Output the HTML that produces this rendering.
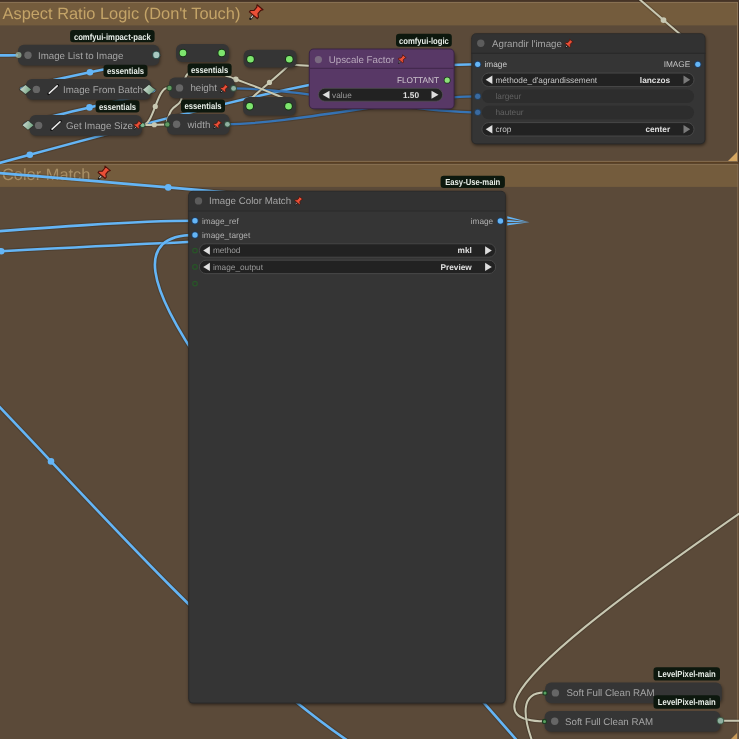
<!DOCTYPE html>
<html><head><meta charset="utf-8"><style>
html,body{margin:0;padding:0;width:739px;height:739px;overflow:hidden;background:#463426}
svg{display:block;will-change:transform;filter:blur(0.35px)}
text{font-family:"Liberation Sans", sans-serif;text-rendering:geometricPrecision}
</style></head><body>
<svg width="739" height="739" viewBox="0 0 739 739">
<defs><linearGradient id="dgrad" x1="0" y1="0" x2="1" y2="0.3"><stop offset="0" stop-color="#d8e0da"/><stop offset="1" stop-color="#78a888"/></linearGradient><clipPath id="clipL"><rect x="0" y="0" width="400" height="400"/></clipPath><filter id="blur" x="-20%" y="-50%" width="140%" height="200%"><feGaussianBlur stdDeviation="1.5"/></filter></defs>
<rect x="0" y="0" width="739" height="739" fill="#463426"/><rect x="-10" y="2.4" width="747.5" height="159" fill="#5b4a39"/><rect x="-10" y="2.4" width="747.5" height="23" fill="#745c3d"/><rect x="-10" y="2.4" width="747.5" height="159" fill="none" stroke="#8c7456" stroke-width="1"/><rect x="0" y="161.9" width="739" height="1.6" fill="#5a3f22"/><rect x="-10" y="164.3" width="747.9" height="600" fill="#5b4a39"/><rect x="-10" y="164.3" width="747.9" height="22.6" fill="#745c3d"/><rect x="-10" y="164.3" width="747.9" height="600" fill="none" stroke="#8c7456" stroke-width="1"/><path d="M737,152 L737,161 L728,161 Z" fill="#d4a662"/><path d="M737,733 L737,739 L731,739 Z" fill="#c89a5a"/><text x="2.5" y="18.7" font-size="16.4" fill="#c4a468" text-anchor="start" font-weight="normal" >Aspect Ratio Logic (Don't Touch)</text><text x="2" y="179.8" font-size="16.4" fill="#a88f66" text-anchor="start" font-weight="normal" >Color Match</text>
<path d="M-2.00,55.40 C1.42,55.38 15.08,55.32 18.50,55.30" fill="none" stroke="#000" stroke-opacity="0.15" stroke-width="4.800000000000001" stroke-linecap="round"/><path d="M-2.00,55.40 C1.42,55.38 15.08,55.32 18.50,55.30" fill="none" stroke="#64b5f6" stroke-width="2.6" stroke-linecap="round"/><path d="M155.00,55.00 C188.63,55.00 -8.63,89.60 25.00,89.60" fill="none" stroke="#000" stroke-opacity="0.15" stroke-width="4.800000000000001"/><path d="M155.00,55.00 C188.63,55.00 -8.63,89.60 25.00,89.60" fill="none" stroke="#64b5f6" stroke-width="2.6"/><circle cx="90.00" cy="72.30" r="3.2899999999999996" fill="#64b5f6"/><path d="M150.50,89.60 C182.27,89.60 -3.27,125.20 28.50,125.20" fill="none" stroke="#000" stroke-opacity="0.15" stroke-width="4.800000000000001"/><path d="M150.50,89.60 C182.27,89.60 -3.27,125.20 28.50,125.20" fill="none" stroke="#64b5f6" stroke-width="2.6"/><circle cx="89.50" cy="107.40" r="3.2899999999999996" fill="#64b5f6"/><path d="M-418.10,245.30 C-189.62,245.30 249.22,64.30 477.70,64.30" fill="none" stroke="#000" stroke-opacity="0.15" stroke-width="4.800000000000001"/><path d="M-418.10,245.30 C-189.62,245.30 249.22,64.30 477.70,64.30" fill="none" stroke="#64b5f6" stroke-width="2.6"/><circle cx="29.80" cy="154.80" r="3.2899999999999996" fill="#64b5f6"/><path d="M142.60,125.10 C153.90,125.10 156.70,87.70 168.00,87.70" fill="none" stroke="#000" stroke-opacity="0.15" stroke-width="4.2"/><path d="M142.60,125.10 C153.90,125.10 156.70,87.70 168.00,87.70" fill="none" stroke="#c8c8b2" stroke-width="2.0"/><circle cx="155.30" cy="106.40" r="2.5999999999999996" fill="#c8c8b2"/><path d="M142.60,125.10 C148.45,125.10 160.15,124.40 166.00,124.40" fill="none" stroke="#000" stroke-opacity="0.15" stroke-width="4.2"/><path d="M142.60,125.10 C148.45,125.10 160.15,124.40 166.00,124.40" fill="none" stroke="#c8c8b2" stroke-width="2.0"/><circle cx="154.30" cy="124.75" r="2.5999999999999996" fill="#c8c8b2"/><path d="M233.70,88.40 C294.99,88.40 416.41,112.30 477.70,112.30" fill="none" stroke="#000" stroke-opacity="0.15" stroke-width="4.5"/><path d="M233.70,88.40 C294.99,88.40 416.41,112.30 477.70,112.30" fill="none" stroke="#3674b6" stroke-width="2.3"/><path d="M227.40,124.20 C290.36,124.20 414.74,96.30 477.70,96.30" fill="none" stroke="#000" stroke-opacity="0.15" stroke-width="4.5"/><path d="M227.40,124.20 C290.36,124.20 414.74,96.30 477.70,96.30" fill="none" stroke="#3674b6" stroke-width="2.3"/><path d="M289.30,59.30 C304.51,59.30 234.49,105.50 249.70,105.50" fill="none" stroke="#000" stroke-opacity="0.15" stroke-width="4.2"/><path d="M289.30,59.30 C304.51,59.30 234.49,105.50 249.70,105.50" fill="none" stroke="#c8c8b2" stroke-width="2.0"/><circle cx="269.50" cy="82.40" r="2.5999999999999996" fill="#c8c8b2"/><path d="M166.00,124.50 C166.88,122.12 168.83,114.15 171.30,110.20 C173.77,106.25 178.85,105.00 180.80,100.80 C182.75,96.60 181.90,89.43 183.00,85.00 C184.10,80.57 185.23,76.70 187.40,74.20 C189.57,71.70 194.57,70.70 196.00,70.00" fill="none" stroke="#000" stroke-opacity="0.15" stroke-width="4.2" stroke-linecap="round"/><path d="M166.00,124.50 C166.88,122.12 168.83,114.15 171.30,110.20 C173.77,106.25 178.85,105.00 180.80,100.80 C182.75,96.60 181.90,89.43 183.00,85.00 C184.10,80.57 185.23,76.70 187.40,74.20 C189.57,71.70 194.57,70.70 196.00,70.00" fill="none" stroke="#c8c8b2" stroke-width="2.0" stroke-linecap="round"/><path d="M215.00,70.00 C216.83,70.92 222.53,73.95 226.00,75.50 C229.47,77.05 230.55,77.32 235.80,79.30 C241.05,81.28 250.28,84.60 257.50,87.40 C264.72,90.20 274.35,94.17 279.10,96.10 C283.85,98.03 284.85,98.52 286.00,99.00" fill="none" stroke="#000" stroke-opacity="0.15" stroke-width="4.2" stroke-linecap="round"/><path d="M215.00,70.00 C216.83,70.92 222.53,73.95 226.00,75.50 C229.47,77.05 230.55,77.32 235.80,79.30 C241.05,81.28 250.28,84.60 257.50,87.40 C264.72,90.20 274.35,94.17 279.10,96.10 C283.85,98.03 284.85,98.52 286.00,99.00" fill="none" stroke="#c8c8b2" stroke-width="2.0" stroke-linecap="round"/><circle cx="235.8" cy="79.3" r="2.9" fill="#c8c8b2"/><path d="M291.00,64.60 C293.92,64.80 305.58,65.60 308.50,65.80" fill="none" stroke="#000" stroke-opacity="0.15" stroke-width="4.2" stroke-linecap="round"/><path d="M291.00,64.60 C293.92,64.80 305.58,65.60 308.50,65.80" fill="none" stroke="#c8c8b2" stroke-width="2.0" stroke-linecap="round"/><path d="M638.00,-2.00 C642.25,1.68 656.33,13.93 663.50,20.10 C670.67,26.27 678.08,32.52 681.00,35.00" fill="none" stroke="#000" stroke-opacity="0.15" stroke-width="4.2" stroke-linecap="round"/><path d="M638.00,-2.00 C642.25,1.68 656.33,13.93 663.50,20.10 C670.67,26.27 678.08,32.52 681.00,35.00" fill="none" stroke="#c8c8b2" stroke-width="2.0" stroke-linecap="round"/><circle cx="663.5" cy="20.1" r="2.9" fill="#c8c8b2"/><g clip-path="url(#clipL)"><path d="M-323.30,155.20 C-77.02,155.20 413.42,219.60 659.70,219.60" fill="none" stroke="#000" stroke-opacity="0.15" stroke-width="4.800000000000001"/><path d="M-323.30,155.20 C-77.02,155.20 413.42,219.60 659.70,219.60" fill="none" stroke="#64b5f6" stroke-width="2.6"/><circle cx="168.20" cy="187.40" r="3.2899999999999996" fill="#64b5f6"/></g><path d="M-288.50,248.40 C-167.43,248.40 73.93,220.80 195.00,220.80" fill="none" stroke="#000" stroke-opacity="0.15" stroke-width="4.800000000000001"/><path d="M-288.50,248.40 C-167.43,248.40 73.93,220.80 195.00,220.80" fill="none" stroke="#64b5f6" stroke-width="2.6"/><circle cx="-46.75" cy="234.60" r="3.2899999999999996" fill="#64b5f6"/><path d="M-290.30,262.80 C-144.43,262.80 146.83,239.60 292.70,239.60" fill="none" stroke="#000" stroke-opacity="0.15" stroke-width="4.800000000000001"/><path d="M-290.30,262.80 C-144.43,262.80 146.83,239.60 292.70,239.60" fill="none" stroke="#64b5f6" stroke-width="2.6"/><circle cx="1.20" cy="251.20" r="3.2899999999999996" fill="#64b5f6"/><path d="M707.40,1096.90 C958.09,1096.90 -55.59,234.90 195.10,234.90" fill="none" stroke="#000" stroke-opacity="0.15" stroke-width="4.800000000000001"/><path d="M707.40,1096.90 C958.09,1096.90 -55.59,234.90 195.10,234.90" fill="none" stroke="#64b5f6" stroke-width="2.6"/><circle cx="451.25" cy="665.90" r="3.2899999999999996" fill="#64b5f6"/><path d="M-422.00,114.50 C-128.71,114.50 230.71,808.30 524.00,808.30" fill="none" stroke="#000" stroke-opacity="0.15" stroke-width="4.800000000000001"/><path d="M-422.00,114.50 C-128.71,114.50 230.71,808.30 524.00,808.30" fill="none" stroke="#64b5f6" stroke-width="2.6"/><circle cx="51.00" cy="461.40" r="3.2899999999999996" fill="#64b5f6"/><path d="M507.2,216.20000000000002 L529.5,222.2 L507.2,218.4 Z" fill="#64b5f6"/><path d="M507.2,219.9 L529.5,222.2 L507.2,222.1 Z" fill="#64b5f6"/><path d="M507.2,223.20000000000002 L529.5,222.2 L507.2,225.4 Z" fill="#64b5f6"/><path d="M1212.90,115.30 C1438.45,115.30 318.95,721.30 544.50,721.30" fill="none" stroke="#000" stroke-opacity="0.15" stroke-width="4.2"/><path d="M1212.90,115.30 C1438.45,115.30 318.95,721.30 544.50,721.30" fill="none" stroke="#c8c8b2" stroke-width="2.0"/><circle cx="878.70" cy="418.30" r="2.5999999999999996" fill="#c8c8b2"/><path d="M661.60,1061.30 C758.34,1061.30 447.76,692.50 544.50,692.50" fill="none" stroke="#000" stroke-opacity="0.15" stroke-width="4.2"/><path d="M661.60,1061.30 C758.34,1061.30 447.76,692.50 544.50,692.50" fill="none" stroke="#c8c8b2" stroke-width="2.0"/><circle cx="603.05" cy="876.90" r="2.5999999999999996" fill="#c8c8b2"/><path d="M720.50,720.80 C724.08,720.80 738.42,720.80 742.00,720.80" fill="none" stroke="#000" stroke-opacity="0.15" stroke-width="4.2" stroke-linecap="round"/><path d="M720.50,720.80 C724.08,720.80 738.42,720.80 742.00,720.80" fill="none" stroke="#c8c8b2" stroke-width="2.0" stroke-linecap="round"/>
<rect x="19" y="46.35" width="141.5" height="20.699999999999996" rx="6" fill="#000" opacity="0.35" filter="url(#blur)"/><rect x="18" y="44.85" width="141.5" height="20.699999999999996" rx="6" fill="#353535"/><circle cx="28" cy="55.2" r="3.7" fill="#666"/><text x="38" y="58.7" font-size="9.73" fill="#a4a4a4" text-anchor="start" font-weight="normal" >Image List to Image</text><circle cx="156.3" cy="54.9" r="4.0" fill="#2f5550"/><circle cx="156.3" cy="54.9" r="3.1" fill="#a8c8c0"/><circle cx="18.5" cy="55" r="3" fill="#9ab09a" opacity="0.8"/><rect x="27" y="80.55" width="125" height="20.700000000000003" rx="6" fill="#000" opacity="0.35" filter="url(#blur)"/><rect x="26" y="79.05" width="125" height="20.700000000000003" rx="6" fill="#353535"/><circle cx="36.4" cy="89.4" r="3.7" fill="#666"/><text x="63" y="92.9" font-size="9.73" fill="#a4a4a4" text-anchor="start" font-weight="normal" >Image From Batch</text><path d="M19.2,89.6 L25.5,84.3 L31.8,89.6 L25.5,94.89999999999999 Z" fill="#1f2a22" opacity="0.7"/><path d="M20.0,89.6 L25.5,85.1 L31.0,89.6 L25.5,94.1 Z" fill="url(#dgrad)"/><path d="M142.2,89.8 L149,84.0 L155.8,89.8 L149,95.6 Z" fill="#1f2a22" opacity="0.7"/><path d="M143.0,89.8 L149,84.8 L155.0,89.8 L149,94.8 Z" fill="url(#dgrad)"/><line x1="48.6" y1="93.8" x2="57.800000000000004" y2="85.39999999999999" stroke="#111" stroke-width="2.6" stroke-linecap="round"/><line x1="49.300000000000004" y1="93.19999999999999" x2="57.2" y2="85.89999999999999" stroke="#e6e6e6" stroke-width="1.6" stroke-linecap="round"/><rect x="30.5" y="116.55" width="112.5" height="20.700000000000003" rx="6" fill="#000" opacity="0.35" filter="url(#blur)"/><rect x="29.5" y="115.05" width="112.5" height="20.700000000000003" rx="6" fill="#353535"/><circle cx="38.6" cy="125.4" r="3.7" fill="#666"/><text x="66" y="128.9" font-size="9.73" fill="#a4a4a4" text-anchor="start" font-weight="normal" >Get Image Size</text><path d="M21.7,125.2 L28,119.9 L34.3,125.2 L28,130.5 Z" fill="#1f2a22" opacity="0.7"/><path d="M22.5,125.2 L28,120.7 L33.5,125.2 L28,129.7 Z" fill="url(#dgrad)"/><line x1="51.4" y1="129.7" x2="60.6" y2="121.3" stroke="#111" stroke-width="2.6" stroke-linecap="round"/><line x1="52.1" y1="129.1" x2="60.0" y2="121.8" stroke="#e6e6e6" stroke-width="1.6" stroke-linecap="round"/><circle cx="142.6" cy="125.2" r="2.8" fill="#2d4a35"/><circle cx="142.6" cy="125.2" r="1.9" fill="#7fb890"/><g transform="translate(137.3,125.4) rotate(40) scale(0.62) translate(0,2)"><line x1="0" y1="0" x2="0" y2="5.2" stroke="#161616" stroke-width="2.4" stroke-linecap="round"/><line x1="0" y1="0.8" x2="0" y2="4.6" stroke="#d0d0d0" stroke-width="1.1"/><path d="M-3.7,-9 L3.7,-9 L2.4,-7.1 L2.4,-3.1 L4.9,-0.9 L4.9,0.9 L-4.9,0.9 L-4.9,-0.9 L-2.4,-3.1 L-2.4,-7.1 Z" fill="#ea4f37" stroke="#4a120a" stroke-width="1.1" stroke-linejoin="round"/></g><rect x="170" y="79.05" width="65.5" height="20.700000000000003" rx="6" fill="#000" opacity="0.35" filter="url(#blur)"/><rect x="169" y="77.55" width="65.5" height="20.700000000000003" rx="6" fill="#353535"/><circle cx="179.5" cy="87.9" r="3.7" fill="#666"/><text x="190.4" y="91.4" font-size="9.73" fill="#a4a4a4" text-anchor="start" font-weight="normal" >height</text><g transform="translate(223.8,88.9) rotate(40) scale(0.62) translate(0,2)"><line x1="0" y1="0" x2="0" y2="5.2" stroke="#161616" stroke-width="2.4" stroke-linecap="round"/><line x1="0" y1="0.8" x2="0" y2="4.6" stroke="#d0d0d0" stroke-width="1.1"/><path d="M-3.7,-9 L3.7,-9 L2.4,-7.1 L2.4,-3.1 L4.9,-0.9 L4.9,0.9 L-4.9,0.9 L-4.9,-0.9 L-2.4,-3.1 L-2.4,-7.1 Z" fill="#ea4f37" stroke="#4a120a" stroke-width="1.1" stroke-linejoin="round"/></g><circle cx="169.5" cy="88" r="3.1" fill="#26422a"/><circle cx="169.5" cy="88" r="2.2" fill="#5f9a60"/><circle cx="233.6" cy="88.4" r="3.3" fill="#34503e"/><circle cx="233.6" cy="88.4" r="2.4" fill="#8fb0a0"/><rect x="168" y="115.45" width="62.5" height="20.700000000000003" rx="6" fill="#000" opacity="0.35" filter="url(#blur)"/><rect x="167" y="113.95" width="62.5" height="20.700000000000003" rx="6" fill="#353535"/><circle cx="176.6" cy="124.30000000000001" r="3.7" fill="#666"/><text x="187.6" y="127.80000000000001" font-size="9.73" fill="#a4a4a4" text-anchor="start" font-weight="normal" >width</text><g transform="translate(217,124.9) rotate(40) scale(0.62) translate(0,2)"><line x1="0" y1="0" x2="0" y2="5.2" stroke="#161616" stroke-width="2.4" stroke-linecap="round"/><line x1="0" y1="0.8" x2="0" y2="4.6" stroke="#d0d0d0" stroke-width="1.1"/><path d="M-3.7,-9 L3.7,-9 L2.4,-7.1 L2.4,-3.1 L4.9,-0.9 L4.9,0.9 L-4.9,0.9 L-4.9,-0.9 L-2.4,-3.1 L-2.4,-7.1 Z" fill="#ea4f37" stroke="#4a120a" stroke-width="1.1" stroke-linejoin="round"/></g><circle cx="167.3" cy="124.4" r="3.1" fill="#26422a"/><circle cx="167.3" cy="124.4" r="2.2" fill="#5f9a60"/><circle cx="227.4" cy="124.3" r="3.3" fill="#34503e"/><circle cx="227.4" cy="124.3" r="2.4" fill="#8fb0a0"/><rect x="177" y="45.5" width="53" height="18" rx="6" fill="#000" opacity="0.35" filter="url(#blur)"/><rect x="176" y="44" width="53" height="18" rx="6" fill="#353535"/><circle cx="183" cy="53" r="4.2" fill="#143514"/><circle cx="183" cy="53" r="3.3" fill="#7ee56e"/><circle cx="221.7" cy="53" r="4.2" fill="#143514"/><circle cx="221.7" cy="53" r="3.3" fill="#7ee56e"/><rect x="244.6" y="51.3" width="53.00000000000003" height="17.799999999999997" rx="6" fill="#000" opacity="0.35" filter="url(#blur)"/><rect x="243.6" y="49.8" width="53.00000000000003" height="17.799999999999997" rx="6" fill="#353535"/><circle cx="250.5" cy="59.3" r="4.2" fill="#143514"/><circle cx="250.5" cy="59.3" r="3.3" fill="#7ee56e"/><circle cx="289.3" cy="59.3" r="4.2" fill="#143514"/><circle cx="289.3" cy="59.3" r="3.3" fill="#7ee56e"/><rect x="244" y="98.5" width="53" height="18.400000000000006" rx="6" fill="#000" opacity="0.35" filter="url(#blur)"/><rect x="243" y="97" width="53" height="18.400000000000006" rx="6" fill="#353535"/><circle cx="249.7" cy="106.2" r="4.2" fill="#143514"/><circle cx="249.7" cy="106.2" r="3.3" fill="#7ee56e"/><circle cx="288.5" cy="106.2" r="4.2" fill="#143514"/><circle cx="288.5" cy="106.2" r="3.3" fill="#7ee56e"/><rect x="310" y="50.5" width="146" height="60" rx="7" fill="#000" opacity="0.35" filter="url(#blur)"/><rect x="308.8" y="48.5" width="145.8" height="60.8" rx="5" fill="#3a2444"/><rect x="309.8" y="49.5" width="143.8" height="58.8" rx="4" fill="#583866"/><path d="M309.8,68.4 L453.6,68.4" stroke="#44294f" stroke-width="1.3"/><circle cx="318.4" cy="59.6" r="3.6" fill="#7a6a80"/><text x="328.8" y="63.0" font-size="9.73" fill="#b8a8bc" text-anchor="start" font-weight="normal" >Upscale Factor</text><g transform="translate(401.6,59.6) rotate(40) scale(0.62) translate(0,2)"><line x1="0" y1="0" x2="0" y2="5.2" stroke="#161616" stroke-width="2.4" stroke-linecap="round"/><line x1="0" y1="0.8" x2="0" y2="4.6" stroke="#d0d0d0" stroke-width="1.1"/><path d="M-3.7,-9 L3.7,-9 L2.4,-7.1 L2.4,-3.1 L4.9,-0.9 L4.9,0.9 L-4.9,0.9 L-4.9,-0.9 L-2.4,-3.1 L-2.4,-7.1 Z" fill="#ea4f37" stroke="#4a120a" stroke-width="1.1" stroke-linejoin="round"/></g><text x="439" y="83.2" font-size="8.28" fill="#d0c8d0" text-anchor="end" font-weight="normal" >FLOTTANT</text><circle cx="447.2" cy="80.2" r="3.4" fill="#1a3a1a"/><circle cx="447.2" cy="80.2" r="2.6" fill="#8de07a"/><rect x="318.4" y="88.3" width="124.2" height="12.9" rx="6.45" fill="#222" stroke="#555" stroke-width="0.7"/><path d="M322.5,94.7 L329.5,90.7 L329.5,98.7 Z" fill="#ddd"/><path d="M438.5,94.7 L431.5,90.7 L431.5,98.7 Z" fill="#ddd"/><text x="332" y="97.6" font-size="8.28" fill="#999" text-anchor="start" font-weight="normal" >value</text><text x="419" y="97.6" font-size="8.28" fill="#e0e0e0" text-anchor="end" font-weight="bold" >1.50</text><rect x="471.8" y="34.7" width="234.09999999999997" height="111.10000000000001" rx="5" fill="#000" opacity="0.45" filter="url(#blur)"/><rect x="471.3" y="33.2" width="234.09999999999997" height="111.10000000000001" rx="5" fill="#2a2a2a"/><rect x="472.3" y="34.2" width="232.09999999999997" height="109.10000000000001" rx="4" fill="#353535"/><path d="M476.3,34.2 L700.4,34.2 Q704.4,34.2 704.4,38.2 L704.4,53.400000000000006 L472.3,53.400000000000006 L472.3,38.2 Q472.3,34.2 476.3,34.2 Z" fill="#323232"/><line x1="471.3" y1="53.400000000000006" x2="705.4" y2="53.400000000000006" stroke="#2a2a2a" stroke-width="1.2"/><circle cx="480.8" cy="43.300000000000004" r="3.7" fill="#5c5c5c"/><text x="492" y="46.800000000000004" font-size="9.73" fill="#a4a4a4" text-anchor="start" font-weight="normal" >Agrandir l'image</text><g transform="translate(568.6,44) rotate(40) scale(0.62) translate(0,2)"><line x1="0" y1="0" x2="0" y2="5.2" stroke="#161616" stroke-width="2.4" stroke-linecap="round"/><line x1="0" y1="0.8" x2="0" y2="4.6" stroke="#d0d0d0" stroke-width="1.1"/><path d="M-3.7,-9 L3.7,-9 L2.4,-7.1 L2.4,-3.1 L4.9,-0.9 L4.9,0.9 L-4.9,0.9 L-4.9,-0.9 L-2.4,-3.1 L-2.4,-7.1 Z" fill="#ea4f37" stroke="#4a120a" stroke-width="1.1" stroke-linejoin="round"/></g><circle cx="477.7" cy="64.3" r="3.5" fill="#1e3f66"/><circle cx="477.7" cy="64.3" r="2.6" fill="#64b5f6"/><text x="484.5" y="67.2" font-size="8.28" fill="#cccccc" text-anchor="start" font-weight="normal" >image</text><text x="690.3" y="67.2" font-size="8.28" fill="#c4c4c4" text-anchor="end" font-weight="normal" >IMAGE</text><circle cx="697.8" cy="64.3" r="3.5" fill="#1e3f66"/><circle cx="697.8" cy="64.3" r="2.6" fill="#64b5f6"/><rect x="481.9" y="73.1" width="212.10000000000002" height="13.4" rx="6.7" fill="#222" stroke="#4e4e4e" stroke-width="0.8"/><path d="M485.7,79.8 L492.4,75.6 L492.4,84.0 Z" fill="#e0e0e0"/><path d="M690.2,79.8 L683.5,75.6 L683.5,84.0 Z" fill="#7a7a7a"/><text x="495.4" y="82.7" font-size="8.28" fill="#c4c4c4" text-anchor="start" font-weight="normal" >méthode_d'agrandissement</text><text x="670.2" y="82.7" font-size="8.28" fill="#e0e0e0" text-anchor="end" font-weight="bold" >lanczos</text><circle cx="477.7" cy="96.3" r="3.5" fill="#24405e"/><circle cx="477.7" cy="96.3" r="2.6" fill="#3a6aa0"/><rect x="481.9" y="89.6" width="212.10000000000002" height="13.4" rx="6.7" fill="#2d2d2d"/><text x="495.5" y="99.2" font-size="8.28" fill="#616161" text-anchor="start" font-weight="normal" >largeur</text><circle cx="477.7" cy="112.3" r="3.5" fill="#24405e"/><circle cx="477.7" cy="112.3" r="2.6" fill="#3a6aa0"/><rect x="481.9" y="105.8" width="212.10000000000002" height="13.4" rx="6.7" fill="#2d2d2d"/><text x="495.5" y="115.4" font-size="8.28" fill="#616161" text-anchor="start" font-weight="normal" >hauteur</text><rect x="481.9" y="122.60000000000001" width="212.10000000000002" height="13.4" rx="6.7" fill="#222" stroke="#4e4e4e" stroke-width="0.8"/><path d="M485.7,129.3 L492.4,125.10000000000001 L492.4,133.5 Z" fill="#e0e0e0"/><path d="M690.2,129.3 L683.5,125.10000000000001 L683.5,133.5 Z" fill="#7a7a7a"/><text x="495.4" y="132.20000000000002" font-size="8.28" fill="#c4c4c4" text-anchor="start" font-weight="normal" >crop</text><text x="670.2" y="132.20000000000002" font-size="8.28" fill="#e0e0e0" text-anchor="end" font-weight="bold" >center</text><rect x="188.7" y="192.3" width="317.6" height="512.8" rx="5" fill="#000" opacity="0.45" filter="url(#blur)"/><rect x="188.2" y="190.8" width="317.6" height="512.8" rx="5" fill="#2a2a2a"/><rect x="189.2" y="191.8" width="315.6" height="510.79999999999995" rx="4" fill="#353535"/><path d="M193.2,191.8 L500.8,191.8 Q504.8,191.8 504.8,195.8 L504.8,211.0 L189.2,211.0 L189.2,195.8 Q189.2,191.8 193.2,191.8 Z" fill="#323232"/><line x1="188.2" y1="211.0" x2="505.8" y2="211.0" stroke="#2a2a2a" stroke-width="1.2"/><circle cx="198.5" cy="200.9" r="3.7" fill="#5c5c5c"/><text x="209" y="204.4" font-size="9.73" fill="#a4a4a4" text-anchor="start" font-weight="normal" >Image Color Match</text><g transform="translate(298.2,201.2) rotate(40) scale(0.62) translate(0,2)"><line x1="0" y1="0" x2="0" y2="5.2" stroke="#161616" stroke-width="2.4" stroke-linecap="round"/><line x1="0" y1="0.8" x2="0" y2="4.6" stroke="#d0d0d0" stroke-width="1.1"/><path d="M-3.7,-9 L3.7,-9 L2.4,-7.1 L2.4,-3.1 L4.9,-0.9 L4.9,0.9 L-4.9,0.9 L-4.9,-0.9 L-2.4,-3.1 L-2.4,-7.1 Z" fill="#ea4f37" stroke="#4a120a" stroke-width="1.1" stroke-linejoin="round"/></g><circle cx="195" cy="220.8" r="3.6" fill="#1e3f66"/><circle cx="195" cy="220.8" r="2.7" fill="#64b5f6"/><text x="202" y="223.7" font-size="8.28" fill="#b0b0b0" text-anchor="start" font-weight="normal" >image_ref</text><circle cx="195" cy="235" r="3.6" fill="#1e3f66"/><circle cx="195" cy="235" r="2.7" fill="#64b5f6"/><text x="202" y="237.9" font-size="8.28" fill="#b0b0b0" text-anchor="start" font-weight="normal" >image_target</text><text x="493.2" y="223.9" font-size="8.28" fill="#b0b0b0" text-anchor="end" font-weight="normal" >image</text><circle cx="500.4" cy="221" r="3.6" fill="#1e3f66"/><circle cx="500.4" cy="221" r="2.7" fill="#64b5f6"/><circle cx="195" cy="250.6" r="2.3" fill="none" stroke="#285528" stroke-width="1.2"/><circle cx="195" cy="266.9" r="2.3" fill="none" stroke="#285528" stroke-width="1.2"/><circle cx="195" cy="283.6" r="2.3" fill="none" stroke="#285528" stroke-width="1.2"/><rect x="199.4" y="243.8" width="296.20000000000005" height="13.4" rx="6.7" fill="#222" stroke="#4e4e4e" stroke-width="0.8"/><path d="M203.20000000000002,250.5 L209.9,246.3 L209.9,254.7 Z" fill="#e0e0e0"/><path d="M491.8,250.5 L485.1,246.3 L485.1,254.7 Z" fill="#ddd"/><text x="212.9" y="253.4" font-size="8.28" fill="#9a9a9a" text-anchor="start" font-weight="normal" >method</text><text x="471.8" y="253.4" font-size="8.28" fill="#e0e0e0" text-anchor="end" font-weight="bold" >mkl</text><rect x="199.4" y="260.2" width="296.20000000000005" height="13.4" rx="6.7" fill="#222" stroke="#4e4e4e" stroke-width="0.8"/><path d="M203.20000000000002,266.9 L209.9,262.7 L209.9,271.09999999999997 Z" fill="#e0e0e0"/><path d="M491.8,266.9 L485.1,262.7 L485.1,271.09999999999997 Z" fill="#ddd"/><text x="212.9" y="269.79999999999995" font-size="8.28" fill="#9a9a9a" text-anchor="start" font-weight="normal" >image_output</text><text x="471.8" y="269.79999999999995" font-size="8.28" fill="#e0e0e0" text-anchor="end" font-weight="bold" >Preview</text><rect x="546.2" y="684.05" width="176.5999999999999" height="20.700000000000045" rx="6" fill="#000" opacity="0.35" filter="url(#blur)"/><rect x="545.2" y="682.55" width="176.5999999999999" height="20.700000000000045" rx="6" fill="#353535"/><circle cx="555.4" cy="692.9" r="3.7" fill="#666"/><text x="566.6" y="696.4" font-size="9.73" fill="#a4a4a4" text-anchor="start" font-weight="normal" >Soft Full Clean RAM</text><circle cx="545" cy="692.9" r="2.6" fill="#1d3d22"/><circle cx="545" cy="692.9" r="1.5" fill="#58a060"/><rect x="545.6" y="712.45" width="175.69999999999993" height="20.699999999999932" rx="6" fill="#000" opacity="0.35" filter="url(#blur)"/><rect x="544.6" y="710.95" width="175.69999999999993" height="20.699999999999932" rx="6" fill="#353535"/><circle cx="554.7" cy="721.3" r="3.7" fill="#666"/><text x="565" y="724.8" font-size="9.73" fill="#a4a4a4" text-anchor="start" font-weight="normal" >Soft Full Clean RAM</text><circle cx="544.5" cy="721.4" r="2.6" fill="#1d3d22"/><circle cx="544.5" cy="721.4" r="1.5" fill="#58a060"/><circle cx="720.5" cy="720.8" r="3.6999999999999997" fill="#3d5a45"/><circle cx="720.5" cy="720.8" r="2.8" fill="#8fb0a0"/>
<rect x="70.1" y="30.1" width="84.5" height="12.199999999999996" rx="3.2" fill="#0d180e"/><g transform="translate(112.35,39.50) scale(1,1.15)"><text x="0" y="0" font-size="7.7" fill="#e8eee8" text-anchor="middle" font-weight="bold">comfyui-impact-pack</text></g><rect x="103.5" y="64.8" width="44.0" height="12.200000000000003" rx="3.2" fill="#0d180e"/><g transform="translate(125.50,74.20) scale(1,1.15)"><text x="0" y="0" font-size="7.7" fill="#e8eee8" text-anchor="middle" font-weight="bold">essentials</text></g><rect x="95.6" y="100.2" width="43.900000000000006" height="12.299999999999997" rx="3.2" fill="#0d180e"/><g transform="translate(117.55,109.65) scale(1,1.15)"><text x="0" y="0" font-size="7.7" fill="#e8eee8" text-anchor="middle" font-weight="bold">essentials</text></g><rect x="187.6" y="63.4" width="44.0" height="12.600000000000001" rx="3.2" fill="#0d180e"/><g transform="translate(209.60,73.00) scale(1,1.15)"><text x="0" y="0" font-size="7.7" fill="#e8eee8" text-anchor="middle" font-weight="bold">essentials</text></g><rect x="181" y="99.6" width="44" height="12.800000000000011" rx="3.2" fill="#0d180e"/><g transform="translate(203.00,109.30) scale(1,1.15)"><text x="0" y="0" font-size="7.7" fill="#e8eee8" text-anchor="middle" font-weight="bold">essentials</text></g><rect x="396" y="33.7" width="55.80000000000001" height="13.099999999999994" rx="3.2" fill="#0d180e"/><g transform="translate(423.90,43.55) scale(1,1.15)"><text x="0" y="0" font-size="7.7" fill="#e8eee8" text-anchor="middle" font-weight="bold">comfyui-logic</text></g><rect x="440.6" y="175.8" width="64.29999999999995" height="12.199999999999989" rx="3.2" fill="#0d180e"/><g transform="translate(472.75,185.20) scale(1,1.15)"><text x="0" y="0" font-size="7.7" fill="#e8eee8" text-anchor="middle" font-weight="bold">Easy-Use-main</text></g><rect x="653.5" y="667.3" width="66.5" height="13.300000000000068" rx="3.2" fill="#0d180e"/><g transform="translate(686.75,677.25) scale(1,1.15)"><text x="0" y="0" font-size="7.7" fill="#e8eee8" text-anchor="middle" font-weight="bold">LevelPixel-main</text></g><rect x="653.5" y="695.3" width="66.5" height="13.400000000000091" rx="3.2" fill="#0d180e"/><g transform="translate(686.75,705.30) scale(1,1.15)"><text x="0" y="0" font-size="7.7" fill="#e8eee8" text-anchor="middle" font-weight="bold">LevelPixel-main</text></g><g transform="translate(255.3,12.9) rotate(40) scale(1.05) translate(0,2)"><line x1="0" y1="0" x2="0" y2="5.2" stroke="#161616" stroke-width="2.4" stroke-linecap="round"/><line x1="0" y1="0.8" x2="0" y2="4.6" stroke="#d0d0d0" stroke-width="1.1"/><path d="M-3.7,-9 L3.7,-9 L2.4,-7.1 L2.4,-3.1 L4.9,-0.9 L4.9,0.9 L-4.9,0.9 L-4.9,-0.9 L-2.4,-3.1 L-2.4,-7.1 Z" fill="#ea4f37" stroke="#4a120a" stroke-width="1.1" stroke-linejoin="round"/></g><g transform="translate(103.4,173.4) rotate(40) scale(0.95) translate(0,2)"><line x1="0" y1="0" x2="0" y2="5.2" stroke="#161616" stroke-width="2.4" stroke-linecap="round"/><line x1="0" y1="0.8" x2="0" y2="4.6" stroke="#d0d0d0" stroke-width="1.1"/><path d="M-3.7,-9 L3.7,-9 L2.4,-7.1 L2.4,-3.1 L4.9,-0.9 L4.9,0.9 L-4.9,0.9 L-4.9,-0.9 L-2.4,-3.1 L-2.4,-7.1 Z" fill="#ea4f37" stroke="#4a120a" stroke-width="1.1" stroke-linejoin="round"/></g>
</svg>
</body></html>
